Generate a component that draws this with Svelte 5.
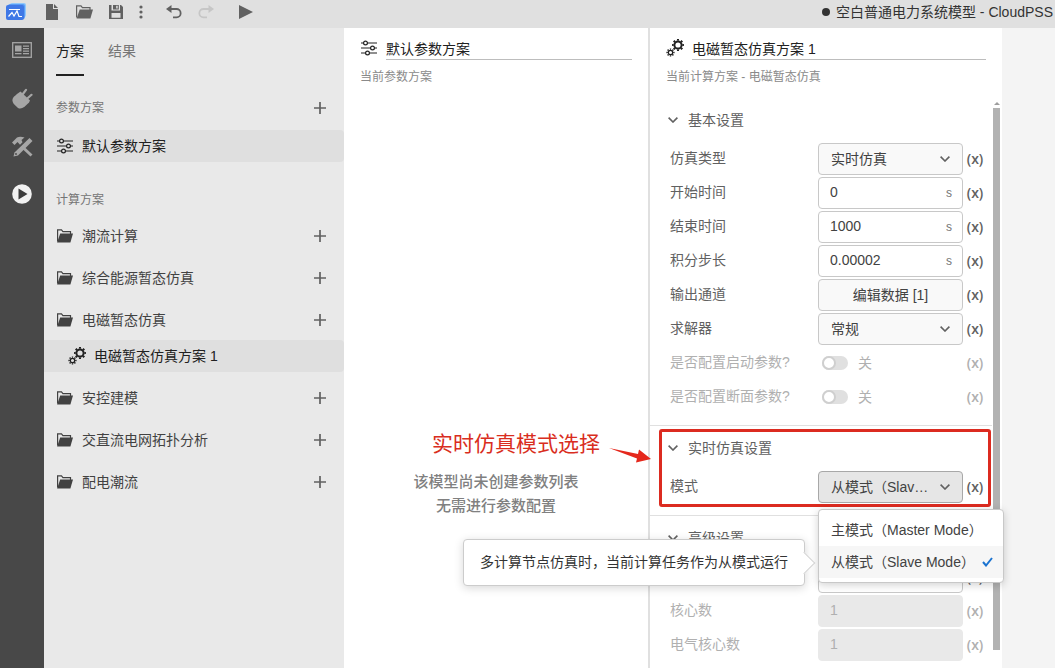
<script lang="ts">
  type Kind = 'select' | 'number' | 'button' | 'switch' | 'text';
  interface Field {
    id: string;
    label: string;
    kind: Kind;
    value: string;
    unit?: string;
    disabled?: boolean;
  }

  const groups = ['潮流计算', '综合能源暂态仿真', '电磁暂态仿真', '安控建模', '交直流电网拓扑分析', '配电潮流'];
  const openGroup = '电磁暂态仿真';

  const basic: Field[] = [
    { id: 'type', label: '仿真类型', kind: 'select', value: '实时仿真' },
    { id: 'begin', label: '开始时间', kind: 'number', value: '0', unit: 's' },
    { id: 'end', label: '结束时间', kind: 'number', value: '1000', unit: 's' },
    { id: 'step', label: '积分步长', kind: 'number', value: '0.00002', unit: 's' },
    { id: 'channels', label: '输出通道', kind: 'button', value: '编辑数据 [1]' },
    { id: 'solver', label: '求解器', kind: 'select', value: '常规' },
    { id: 'start', label: '是否配置启动参数?', kind: 'switch', value: '关', disabled: true },
    { id: 'section', label: '是否配置断面参数?', kind: 'switch', value: '关', disabled: true },
  ];

  const advanced: Field[] = [
    { id: 'option', label: '', kind: 'text', value: '' },
    { id: 'cores', label: '核心数', kind: 'text', value: '1', disabled: true },
    { id: 'ecores', label: '电气核心数', kind: 'text', value: '1', disabled: true },
  ];

  const modes = ['主模式（Master Mode）', '从模式（Slave Mode）'];
  let mode = $state(modes[1]);
</script>

{#snippet sliders()}
  <svg width="16" height="16" viewBox="0 0 16 16" fill="none" stroke="currentColor" stroke-width="1.2">
    <path d="M0 3h2.6M6.4 3H16M0 8h9.6M13.4 8H16M0 13h4.6M8.4 13H16" />
    <circle cx="4.5" cy="3" r="1.9" /><circle cx="11.5" cy="8" r="1.9" /><circle cx="6.5" cy="13" r="1.9" />
  </svg>
{/snippet}

{#snippet gears()}
  <svg width="18" height="18" viewBox="0 0 18 18" fill="none" stroke="currentColor">
    <circle cx="12" cy="6" r="3.6" stroke-width="2" />
    <circle cx="12" cy="6" r="5.1" stroke-width="1.8" pathLength="16" stroke-dasharray="1 1" stroke-dashoffset="0.5" />
    <circle cx="4.5" cy="13.5" r="2.2" stroke-width="1.3" />
    <circle cx="4.5" cy="13.5" r="3.4" stroke-width="1.4" pathLength="16" stroke-dasharray="1 1" stroke-dashoffset="0.5" />
  </svg>
{/snippet}

{#snippet folder()}
  <svg width="17" height="14" viewBox="0 0 17 14">
    <path d="M1.600 12.500V.9H5.500l1.400 1.700h7.600V5" fill="none" stroke="currentColor" stroke-width="1.200" />
    <path d="M4.200 4.600H17l-2.600 8.800H1.100z" fill="currentColor" />
  </svg>
{/snippet}

{#snippet plus()}
  <svg width="12" height="12" viewBox="0 0 12 12" stroke="currentColor" stroke-width="1.7"><path d="M6 0v12M0 6h12" /></svg>
{/snippet}

{#snippet chevron()}
  <svg width="10" height="6" viewBox="0 0 10 6" fill="none" stroke="currentColor" stroke-width="1.6"><path d="M.6.6 5 5 9.400.6" /></svg>
{/snippet}

{#snippet row(f: Field)}
  <div class="row" class:off={f.disabled}>
    <label for={f.id}>{f.label}</label>
    <div class="control">
      {#if f.kind === 'select'}
        <select id={f.id}><option>{f.value}</option></select>
        <span class="caret">{@render chevron()}</span>
      {:else if f.kind === 'button'}
        <button class="edit" id={f.id}>{f.value}</button>
      {:else if f.kind === 'switch'}
        <span class="toggle"><input type="checkbox" id={f.id} disabled={f.disabled} />{f.value}</span>
      {:else}
        <input class="box" type="text" id={f.id} value={f.value} disabled={f.disabled} />
        {#if f.unit}<span class="unit">{f.unit}</span>{/if}
      {/if}
    </div>
    <button class="expr" disabled={f.disabled}>(x)</button>
  </div>
{/snippet}

<div class="app" lang="zh-CN">
  <header>
    <svg class="logo" width="21" height="18" viewBox="0 0 21 18">
      <rect x="4" y="0" width="16" height="14" rx="2" fill="#8fc7fb" />
      <rect x="2" y="1" width="17" height="15" rx="2" fill="#5a9df5" />
      <rect x="0" y="2" width="18" height="15" rx="2" fill="#3f78e6" />
      <path d="M3 6.500h11M2.500 13.500 6 9.500l2 3.500 3-5 2 5.500h3" fill="none" stroke="#fff" stroke-width="1.2" />
    </svg>
    <nav class="tools">
      <button aria-label="新建"><svg width="12" height="16" viewBox="0 0 12 16"><path d="M0 0h7v5h5v11H0zM8 0l4 4H8z" fill="currentColor" /></svg></button>
      <button aria-label="打开"><svg width="17" height="14" viewBox="0 0 17 14"><path d="M.6 12.500V.9H5l1.400 1.700h7.600V5" fill="none" stroke="currentColor" stroke-width="1.200" /><path d="M3.700 4.600H17l-2.600 8.800H.6z" fill="currentColor" /></svg></button>
      <button aria-label="保存"><svg width="14" height="14" viewBox="0 0 14 14"><path fill-rule="evenodd" d="M0 0h2.500v5.500h8.500V0H12l2 2v12H0zM2.500 8v4.800h9V8zM4 0h5.800v4.400H4zM7.200 .8v2.800h1.500V.8z" fill="currentColor" /></svg></button>
      <button class="narrow" aria-label="更多"><svg width="4" height="14" viewBox="0 0 4 14" fill="currentColor"><circle cx="2" cy="2" r="1.600" /><circle cx="2" cy="7" r="1.600" /><circle cx="2" cy="12" r="1.600" /></svg></button>
      <button class="undo" aria-label="撤销"><svg width="16" height="14" viewBox="0 0 16 14"><path d="M3 4h7.500a4 4 0 0 1 0 8.300H7" fill="none" stroke="currentColor" stroke-width="1.800" /><path d="M5.500 0v8L0 4z" fill="currentColor" /></svg></button>
      <button aria-label="重做" disabled><svg width="16" height="14" viewBox="0 0 16 14"><path d="M13 4H5.500a4 4 0 0 0 0 8.300H9" fill="none" stroke="currentColor" stroke-width="1.800" /><path d="M10.500 0v8L16 4z" fill="currentColor" /></svg></button>
      <button class="run" aria-label="运行"><svg width="14" height="14" viewBox="0 0 14 14"><path d="M0 0l14 7-14 7z" fill="currentColor" /></svg></button>
    </nav>
    <div class="title"><i></i>空白普通电力系统模型 - CloudPSS</div>
  </header>

  <main>
    <nav class="rail">
      <button aria-label="总览"><svg width="20" height="16" viewBox="0 0 20 16"><rect x=".7" y=".7" width="18.600" height="14.600" fill="none" stroke="currentColor" stroke-width="1.300" /><path d="M3 3.500h6.500v6H3zM11 3.500h6v1.300h-6zM11 6h6v1.300h-6zM11 8.500h6v1.300h-6zM3 11h6.500v1.300H3zM11 11h6v1.300h-6z" fill="currentColor" /></svg></button>
      <button aria-label="接口"><svg width="21" height="21" viewBox="0 0 21 21"><path d="M8.500 3.500 18 12.500 17 14.500l-4.500 4.300Q9 21.500 6 20L1.800 16Q-.5 13 1 10Q2 8 8.500 3.500z" fill="currentColor" /><path d="M10.500 6.500 14 1.800M15 10.800 19.500 6.800" stroke="currentColor" stroke-width="2.200" stroke-linecap="round" /></svg></button>
      <button aria-label="实现"><svg width="21" height="21" viewBox="0 0 21 21" fill="currentColor"><path d="M0 6.500 5 1.500Q8 0 12.500 1.500L9.500 4l1 2.300L8 8.700 5.500 6 2.500 9z" /><path d="M12.500 11 20.500 18.500 18.500 20.500 10.500 13z" /><path d="M17.500 2 20.500 5 6 19.500 1.500 20.500 2.500 16.500z" /><circle cx="4" cy="18" r=".9" fill="#484848" /></svg></button>
      <button class="active" aria-label="运行"><svg width="20" height="20" viewBox="0 0 20 20"><circle cx="10" cy="10" r="9.800" fill="#f2f2f2" /><path d="M6.500 4.500 15.500 10l-9 5.500z" fill="#3c3c3c" /></svg></button>
    </nav>

    <aside>
      <div class="tabs"><button class="on">方案</button><button>结果</button></div>
      <div class="head"><span>参数方案</span><button class="add" aria-label="新建参数方案">{@render plus()}</button></div>
      <a class="item selected first" href="#params">{@render sliders()}默认参数方案</a>
      <div class="head second"><span>计算方案</span></div>
      <div class="groups">
        {#each groups as g}
          <div class="group">
            <div class="item">{@render folder()}<span>{g}</span><button class="add" aria-label={'新建' + g}>{@render plus()}</button></div>
            {#if g === openGroup}
              <a class="item selected child" href="#job">{@render gears()}电磁暂态仿真方案 1</a>
            {/if}
          </div>
        {/each}
      </div>
    </aside>

    <section class="params">
      <div class="name">{@render sliders()}<input type="text" value="默认参数方案" aria-label="默认参数方案" /></div>
      <p class="sub">当前参数方案</p>
      <p class="empty">该模型尚未创建参数列表<br />无需进行参数配置</p>
    </section>

    <section class="job">
      <div class="jobhead">
        <div class="name">{@render gears()}<input type="text" value="电磁暂态仿真方案 1" aria-label="电磁暂态仿真方案 1" /></div>
        <p class="sub">当前计算方案 - 电磁暂态仿真</p>
      </div>
      <div class="scroll">
        <div class="form">
          <section>
            <h3>{@render chevron()}基本设置</h3>
            {#each basic as f}{@render row(f)}{/each}
          </section>
          <section class="modes">
            <h3>{@render chevron()}实时仿真设置</h3>
            <div class="row">
              <label for="mode">模式</label>
              <div class="control">
                <select id="mode" class="pressed" bind:value={mode}>
                  {#each modes as m}<option>{m}</option>{/each}
                </select>
                <span class="caret">{@render chevron()}</span>
                <div class="menu">
                  {#each modes as m}
                    <button class:chosen={m === mode} onclick={() => (mode = m)}>
                      {m}
                      {#if m === mode}<svg width="11" height="10" viewBox="0 0 11 10" fill="none" stroke="#1a73d0" stroke-width="2"><path d="M1 5l3 3.500L10 1" /></svg>{/if}
                    </button>
                  {/each}
                  <div class="tip">多计算节点仿真时，当前计算任务作为从模式运行</div>
                </div>
              </div>
              <button class="expr">(x)</button>
            </div>
            <div class="frame"></div>
            <div class="note">
              实时仿真模式选择
              <svg width="42" height="18" viewBox="0 0 42 18"><path d="M0 2 29 8l1-4.500L42 13l-15 3.500 1-4z" fill="#e5281c" /></svg>
            </div>
          </section>
          <section>
            <h3>{@render chevron()}高级设置</h3>
            {#each advanced as f}{@render row(f)}{/each}
          </section>
        </div>
        <div class="bar"><i></i><b></b></div>
      </div>
    </section>
  </main>
</div>

<style>
  :global(body) { margin: 0; overflow: hidden; }
  .app, .app button, .app input, .app select { font: 14px/20px "Liberation Sans", "Noto Sans CJK SC", sans-serif; }
  .app { height: 100vh; display: flex; flex-direction: column; overflow: hidden; color: #424242; background: #f4f4f4; }
  .app * { box-sizing: border-box; }
  button { border: 0; padding: 0; background: none; color: inherit; }
  svg { display: block; flex: none; }
  p, h3 { margin: 0; }
  a { color: inherit; text-decoration: none; }

  header { height: 28px; flex: none; display: flex; align-items: center; padding: 0 2px 4px 6px; background: #e0e0e0; }
  .tools { display: flex; align-items: center; margin-left: 9px; color: #616161; }
  .tools button { width: 32px; height: 24px; display: grid; place-items: center; }
  .tools .narrow { width: 18px; }
  .tools .undo { margin-left: 8px; }
  .tools .run { margin-left: 8px; }
  .tools button:disabled { color: #c6c6c6; }
  .title { margin-left: auto; display: flex; align-items: center; gap: 6px; color: #333; white-space: nowrap; }
  .title i { width: 8px; height: 8px; border-radius: 50%; background: #333; }

  main { flex: 1; min-height: 0; display: grid; grid-template: minmax(0, 1fr) / 44px 300px 304fr 354fr 53fr; }
  .rail { background: #484848; display: flex; flex-direction: column; gap: 4px; color: #a6a6a6; }
  .rail button { height: 44px; display: grid; place-items: center; }

  aside { background: #e9e9e9; color: #424242; }
  .tabs { display: flex; gap: 24px; padding: 0 12px; height: 48px; margin-bottom: 16px; }
  .tabs button { height: 48px; border-bottom: 2px solid transparent; color: #757575; }
  .tabs .on { color: #212121; border-color: #212121; }
  .head { height: 32px; display: flex; align-items: center; justify-content: space-between; padding: 0 12px; font-size: 12px; color: #757575; }
  .second { margin: 22px 0 4px; }
  .add { width: 24px; height: 24px; display: grid; place-items: center; color: #616161; margin-left: auto; }
  .item { height: 32px; display: flex; align-items: center; gap: 9px; padding: 0 12px; }
  .item.first { margin-top: 6px; padding-left: 13px; }
  .selected { background: #dfdfdf; border-radius: 0 4px 4px 0; color: #212121; }
  .groups { display: flex; flex-direction: column; gap: 10px; }
  .child { margin-top: 4px; padding-left: 24px; gap: 8px; }

  .params, .jobhead { padding: 8px 16px 0; }
  .params, .job { background: #fff; min-width: 0; }
  .name { display: flex; align-items: center; gap: 8px; height: 24px; color: #212121; }
  .params .name { gap: 9px; padding-left: 1px; }
  .name input { flex: 1; min-width: 0; height: 24px; padding: 0; border: 0; border-bottom: 1px solid #bdbdbd; background: none; color: #212121; outline: 0; }
  .sub { margin-top: 7px; font-size: 12px; color: #8a8a8a; }
  .empty { margin-top: 383px; text-align: center; font-size: 15px; line-height: 24px; font-weight: 500; color: #808080; }

  .job { border-left: 2px solid #e0e0e0; display: flex; flex-direction: column; }
  .scroll { flex: 1; min-height: 0; display: flex; margin-top: 11px; }
  .form { flex: 1; min-width: 0; }
  .form section { position: relative; padding-bottom: 10px; }
  .form section + section { border-top: 1px solid #e0e0e0; }
  h3 { height: 45px; display: flex; align-items: center; gap: 10px; padding: 0 0 2px 18px; font-size: 14px; font-weight: 400; color: #616161; }
  .row { display: flex; align-items: center; height: 32px; margin-bottom: 2px; padding: 0 5px 0 20px; color: #616161; }
  .row label { flex: 1; white-space: nowrap; padding-bottom: 2px; }
  .control { position: relative; width: 145px; height: 32px; display: flex; align-items: center; }
  select, .box, .edit { width: 100%; height: 32px; border: 1px solid #c8c8c8; border-radius: 4px; }
  select, .edit { background: #f9f9f9; color: #424242; }
  select { appearance: none; padding: 0 28px 0 12px; overflow: hidden; text-overflow: ellipsis; white-space: nowrap; outline: 0; }
  .box { padding: 0 24px 2px 11px; background: #fff; color: #424242; outline: 0; }
  .box:disabled { background: #e9e9e9; border-color: #e9e9e9; color: #b0b0b0; }
  .pressed { background: #e6e6e6; border-color: #a8a8a8; }
  .caret { position: absolute; right: 13px; top: 13px; color: #616161; pointer-events: none; }
  .unit { position: absolute; right: 11px; top: 6px; font-size: 12px; color: #757575; }
  .row .expr { width: 24px; text-align: center; font-family: "Open Sans", sans-serif; font-weight: 600; color: #616161; }
  .off, .row .expr:disabled { color: #b0b0b0; }
  .toggle { display: flex; align-items: center; gap: 10px; padding-left: 4px; }
  .toggle input { appearance: none; width: 26px; height: 14px; margin: 0; border-radius: 7px; background: #e0e0e0; display: flex; }
  .toggle input::before { content: ""; box-sizing: border-box; width: 14px; height: 14px; border: 2px solid #cfcfcf; border-radius: 50%; background: #fff; }

  .menu { position: absolute; z-index: 3; top: 38px; left: 0; width: 186px; padding: 4px 0; background: #fff; border: 1px solid #c8c8c8; border-radius: 4px; box-shadow: 0 2px 8px rgba(0, 0, 0, 0.18); }
  .menu button { width: 100%; height: 32px; display: flex; align-items: center; justify-content: space-between; padding: 0 10px 0 12px; color: #424242; white-space: nowrap; }
  .menu .chosen { background: #f6f6f6; }
  .tip { position: absolute; right: 198px; top: 29px; height: 47px; padding: 0 16px; line-height: 45px; white-space: nowrap; color: #333; background: #fff; border: 1px solid #ccc; border-radius: 4px; box-shadow: 0 2px 10px rgba(0, 0, 0, 0.16); }
  .tip::after { content: ""; position: absolute; right: -8px; top: 15px; width: 15px; height: 15px; background: #fff; border: solid #d4d4d4; border-width: 1px 1px 0 0; transform: rotate(45deg); }

  .frame { position: absolute; z-index: 2; inset: 3px 1px 8px 9px; border: 3px solid #dc2b20; border-radius: 3px; pointer-events: none; }
  .note { position: absolute; right: 341px; top: -2px; display: flex; align-items: center; gap: 9px; white-space: nowrap; font-size: 21px; line-height: 28px; color: #d92d20; }
  .note svg { margin-top: 22px; }

  .bar { width: 10px; display: flex; flex-direction: column; align-items: center; padding: 4px 2px 18px 1px; }
  .bar i { border: solid transparent; border-width: 0 3px 3px; border-bottom-color: #9e9e9e; margin-bottom: 3px; }
  .bar b { flex: 1; width: 7px; background: #b2b2b2; }
</style>
